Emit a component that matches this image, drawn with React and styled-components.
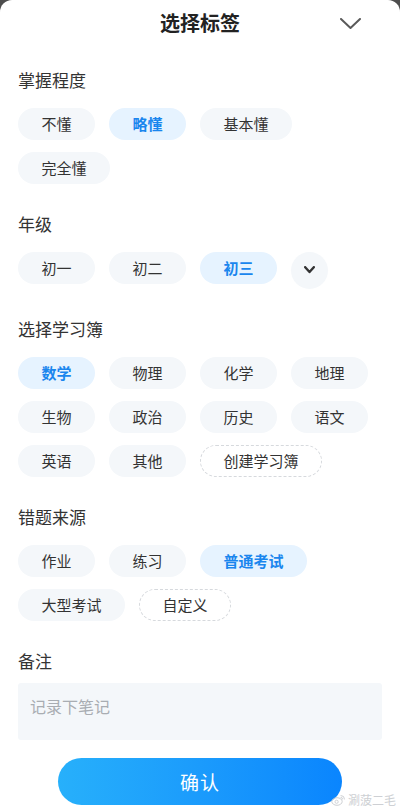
import * as React from "react"
import styled, { createGlobalStyle } from "styled-components"

const GlobalStyle = createGlobalStyle`
* { box-sizing: border-box; }

html, body {
  margin: 0;
  padding: 0;
  background: #4d4d4d;
}

body {
  font-family: "Noto Sans CJK SC", "Noto Sans", sans-serif;
  color: #333;
}
`

const Sheet = styled.div`
  position: relative;
  width: 400px;
  height: 812px;
  background: #fff;
  border-radius: 12px 12px 0 0;
  padding: 0 18px;
  overflow: hidden;
`

const Header = styled.header`
  position: relative;
  height: 46px;
  display: flex;
  align-items: center;
  justify-content: center;
`

const Title = styled.h1`
  margin: 0;
  font-size: 20px;
  font-weight: 700;
  color: #222;
  line-height: 24px;
`

const CloseButton = styled.button`
  position: absolute;
  right: 20px;
  top: 16px;
  width: 24px;
  height: 16px;
  padding: 0;
  border: none;
  background: none;
  display: flex;
  align-items: center;
  justify-content: center;
`

const Section = styled.section`
  margin-top: ${(p) => (p.$first ? "22px" : "28px")};
`

const Label = styled.div`
  font-size: 17px;
  line-height: 24px;
  color: #333;
  margin-bottom: ${(p) => (p.$tight ? "10px" : "16px")};
`

const ChipGrid = styled.div`
  display: flex;
  flex-wrap: wrap;
  gap: 12px 14px;
  align-items: flex-start;
`

const Chip = styled.button`
  height: 32px;
  min-width: 77px;
  padding: 0 22.5px;
  border-radius: 16px;
  font-family: inherit;
  font-size: 15px;
  line-height: 30px;
  white-space: nowrap;
  border: 1px ${(p) => (p.$dashed ? "dashed #d6d9dd" : "solid transparent")};
  background: ${(p) => (p.$active ? "#e6f3ff" : p.$dashed ? "#fff" : "#f4f7fa")};
  color: ${(p) => (p.$active ? "#1a86ee" : "#333")};
  font-weight: ${(p) => (p.$active ? 700 : 400)};
`

const MoreButton = styled.button`
  width: 37px;
  height: 37px;
  border-radius: 50%;
  border: none;
  padding: 0;
  background: #f4f7fa;
  display: flex;
  align-items: center;
  justify-content: center;
`

const NoteBox = styled.div`
  height: 57px;
  background: #f4f7fa;
  border-radius: 3px;
  padding: 12px 12px;
  font-size: 16px;
  line-height: 22px;
  color: #a9adb2;
`

const ConfirmButton = styled.button`
  display: block;
  margin: 18px auto 0;
  width: 284px;
  height: 47px;
  border: none;
  border-radius: 24px;
  background: linear-gradient(90deg, #27b0fb 0%, #1b9bfc 50%, #0a85fe 100%);
  color: #fff;
  font-family: inherit;
  font-size: 19px;
  font-weight: 400;
  letter-spacing: 1px;
`

const Watermark = styled.div`
  position: absolute;
  right: 4px;
  bottom: 4px;
  display: flex;
  align-items: center;
  gap: 2px;
  font-size: 12px;
  color: #c9ccd0;
  opacity: 0.9;
`

const mastery = ["不懂", "略懂", "基本懂", "完全懂"]
const grades = ["初一", "初二", "初三"]
const books = ["数学", "物理", "化学", "地理", "生物", "政治", "历史", "语文", "英语", "其他"]
const sources = ["作业", "练习", "普通考试", "大型考试"]

function Chevron({ size = 20, stroke = 2, color = "#555", height = 10 }) {
  return (
    <svg width={size} height={height + stroke} viewBox={`0 0 ${size} ${height + stroke}`} fill="none">
      <path
        d={`M${stroke / 2} ${stroke / 2} L${size / 2} ${height} L${size - stroke / 2} ${stroke / 2}`}
        stroke={color}
        strokeWidth={stroke}
        strokeLinecap="round"
        strokeLinejoin="round"
      />
    </svg>
  )
}

function App() {
  return (
    <Sheet>
      <GlobalStyle />
      <Header>
        <Title>选择标签</Title>
        <CloseButton>
          <Chevron size={21} height={10} stroke={2} color="#5a5a5a" />
        </CloseButton>
      </Header>

      <Section $first>
        <Label>掌握程度</Label>
        <ChipGrid>
          {mastery.map((m) => (
            <Chip key={m} $active={m === "略懂"}>{m}</Chip>
          ))}
        </ChipGrid>
      </Section>

      <Section>
        <Label>年级</Label>
        <ChipGrid>
          {grades.map((g) => (
            <Chip key={g} $active={g === "初三"}>{g}</Chip>
          ))}
          <MoreButton>
            <Chevron size={11} height={6} stroke={2.4} color="#333" />
          </MoreButton>
        </ChipGrid>
      </Section>

      <Section>
        <Label>选择学习簿</Label>
        <ChipGrid>
          {books.map((b) => (
            <Chip key={b} $active={b === "数学"}>{b}</Chip>
          ))}
          <Chip $dashed>创建学习簿</Chip>
        </ChipGrid>
      </Section>

      <Section>
        <Label>错题来源</Label>
        <ChipGrid>
          {sources.map((s) => (
            <Chip key={s} $active={s === "普通考试"}>{s}</Chip>
          ))}
          <Chip $dashed>自定义</Chip>
        </ChipGrid>
      </Section>

      <Section>
        <Label $tight>备注</Label>
        <NoteBox>记录下笔记</NoteBox>
      </Section>

      <ConfirmButton>确认</ConfirmButton>

      <Watermark>
        <svg width="15" height="12" viewBox="0 0 15 12" fill="none">
          <ellipse cx="6" cy="7.5" rx="5.2" ry="3.8" stroke="#c9ccd0" strokeWidth="1" />
          <circle cx="5.6" cy="7.8" r="1.6" stroke="#c9ccd0" strokeWidth="0.9" />
          <path d="M10 1.5 A3.5 3.5 0 0 1 13.5 5" stroke="#c9ccd0" strokeWidth="1" strokeLinecap="round" />
          <path d="M10 3.4 A1.6 1.6 0 0 1 11.6 5" stroke="#c9ccd0" strokeWidth="1" strokeLinecap="round" />
        </svg>
        <span>涮菠二毛</span>
      </Watermark>
    </Sheet>
  )
}

export default App
